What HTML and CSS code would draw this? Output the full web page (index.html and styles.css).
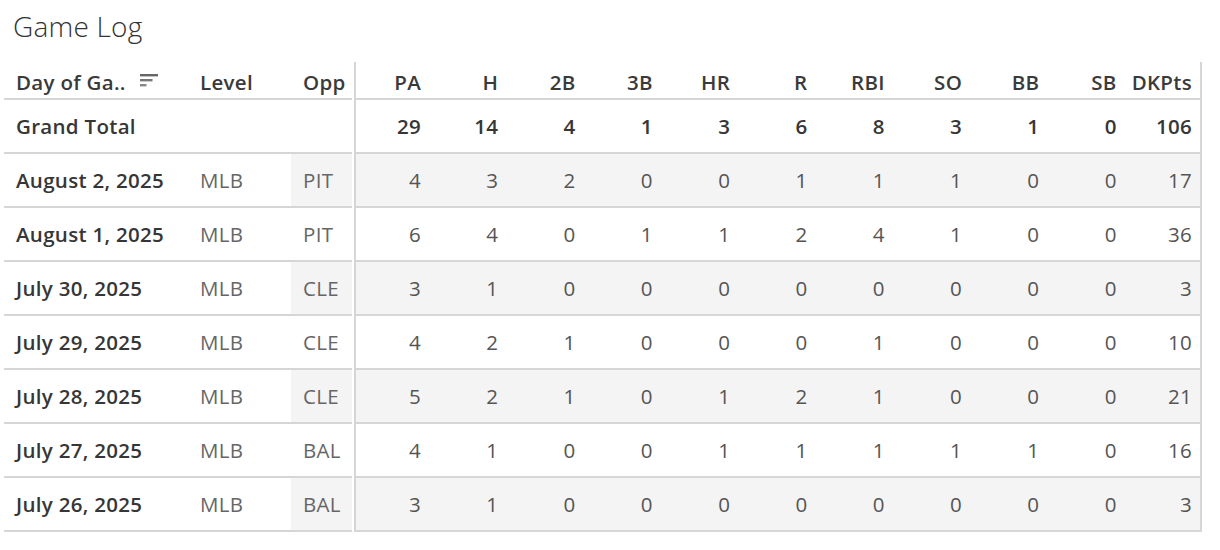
FILE: index.html
```html
<!DOCTYPE html>
<html lang="en">
<head>
<meta charset="utf-8">
<title>Game Log</title>
<link rel="stylesheet" href="styles.css">
</head>
<body>
<div class="page">
  <h1 class="title">Game Log</h1>
  <div class="log">
    <div class="row head">
      <div class="c date">Day of Ga.. <svg class="sort" width="19" height="13" viewBox="0 0 19 13"><rect x="0" y="0" width="18" height="2.4" fill="#666"/><rect x="0" y="5" width="12.5" height="2.4" fill="#777"/><rect x="0" y="10" width="6.5" height="2.4" fill="#888"/></svg></div>
      <div class="c lvl">Level</div>
      <div class="c opp">Opp</div>
      <div class="sep"></div>
      <div class="c n first">PA</div><div class="c n">H</div><div class="c n">2B</div><div class="c n">3B</div><div class="c n">HR</div><div class="c n">R</div><div class="c n">RBI</div><div class="c n">SO</div><div class="c n">BB</div><div class="c n">SB</div><div class="c n last">DKPts</div>
    </div>
    <div class="row total">
      <div class="c date">Grand Total</div>
      <div class="c lvl"></div>
      <div class="c opp"></div>
      <div class="sep"></div>
      <div class="c n first">29</div><div class="c n">14</div><div class="c n">4</div><div class="c n">1</div><div class="c n">3</div><div class="c n">6</div><div class="c n">8</div><div class="c n">3</div><div class="c n">1</div><div class="c n">0</div><div class="c n last">106</div>
    </div>
    <div class="row band">
      <div class="c date">August 2, 2025</div><div class="c lvl">MLB</div><div class="c opp">PIT</div><div class="sep"></div>
      <div class="c n first">4</div><div class="c n">3</div><div class="c n">2</div><div class="c n">0</div><div class="c n">0</div><div class="c n">1</div><div class="c n">1</div><div class="c n">1</div><div class="c n">0</div><div class="c n">0</div><div class="c n last">17</div>
    </div>
    <div class="row">
      <div class="c date">August 1, 2025</div><div class="c lvl">MLB</div><div class="c opp">PIT</div><div class="sep"></div>
      <div class="c n first">6</div><div class="c n">4</div><div class="c n">0</div><div class="c n">1</div><div class="c n">1</div><div class="c n">2</div><div class="c n">4</div><div class="c n">1</div><div class="c n">0</div><div class="c n">0</div><div class="c n last">36</div>
    </div>
    <div class="row band">
      <div class="c date">July 30, 2025</div><div class="c lvl">MLB</div><div class="c opp">CLE</div><div class="sep"></div>
      <div class="c n first">3</div><div class="c n">1</div><div class="c n">0</div><div class="c n">0</div><div class="c n">0</div><div class="c n">0</div><div class="c n">0</div><div class="c n">0</div><div class="c n">0</div><div class="c n">0</div><div class="c n last">3</div>
    </div>
    <div class="row">
      <div class="c date">July 29, 2025</div><div class="c lvl">MLB</div><div class="c opp">CLE</div><div class="sep"></div>
      <div class="c n first">4</div><div class="c n">2</div><div class="c n">1</div><div class="c n">0</div><div class="c n">0</div><div class="c n">0</div><div class="c n">1</div><div class="c n">0</div><div class="c n">0</div><div class="c n">0</div><div class="c n last">10</div>
    </div>
    <div class="row band">
      <div class="c date">July 28, 2025</div><div class="c lvl">MLB</div><div class="c opp">CLE</div><div class="sep"></div>
      <div class="c n first">5</div><div class="c n">2</div><div class="c n">1</div><div class="c n">0</div><div class="c n">1</div><div class="c n">2</div><div class="c n">1</div><div class="c n">0</div><div class="c n">0</div><div class="c n">0</div><div class="c n last">21</div>
    </div>
    <div class="row">
      <div class="c date">July 27, 2025</div><div class="c lvl">MLB</div><div class="c opp">BAL</div><div class="sep"></div>
      <div class="c n first">4</div><div class="c n">1</div><div class="c n">0</div><div class="c n">0</div><div class="c n">1</div><div class="c n">1</div><div class="c n">1</div><div class="c n">1</div><div class="c n">1</div><div class="c n">0</div><div class="c n last">16</div>
    </div>
    <div class="row band">
      <div class="c date">July 26, 2025</div><div class="c lvl">MLB</div><div class="c opp">BAL</div><div class="sep"></div>
      <div class="c n first">3</div><div class="c n">1</div><div class="c n">0</div><div class="c n">0</div><div class="c n">0</div><div class="c n">0</div><div class="c n">0</div><div class="c n">0</div><div class="c n">0</div><div class="c n">0</div><div class="c n last">3</div>
    </div>
  </div>
</div>
</body>
</html>
```
FILE: styles.css
```css
html, body {
  margin: 0;
  padding: 0;
  background: #fff;
}
body {
  font-family: "Open Sans", "Noto Sans", sans-serif;
  color: #333;
}
.page {
  padding: 10px 14px 0 4px;
}
.title {
  margin: 0 0 20px 9px;
  font-size: 28px;
  line-height: 32px;
  font-weight: 300;
  color: #333;
  letter-spacing: 0.2px;
}
.log {
  display: grid;
  grid-template-columns: 183px 104px 61px 2px 75px repeat(9, 77.3px) 77.3px;
  width: 1202px;
}
.row {
  display: contents;
}
.c {
  box-sizing: border-box;
  height: 54px;
  display: flex;
  align-items: center;
  border-bottom: 2px solid #d6d6d6;
  font-size: 20.5px;
  letter-spacing: 0.3px;
  white-space: nowrap;
}
.sep {
  height: 54px;
}
.head .c, .head .sep {
  height: 38px;
}
.head .c {
  align-items: flex-end;
  padding-bottom: 2px;
  font-weight: 600;
  color: #3a3a3a;
}
.date {
  padding-left: 12px;
  color: #363636;
  font-weight: 600;
}
.sort {
  margin-left: 14px;
  margin-bottom: 9px;
}
.lvl {
  padding-left: 13px;
  color: #666;
  font-weight: 400;
}
.opp {
  padding-left: 12px;
  color: #666;
  font-weight: 400;
}
.head .lvl, .head .opp {
  color: #3a3a3a;
}
.n {
  justify-content: flex-end;
  padding-right: 8px;
  color: #555;
  font-weight: 400;
}
.head .n {
  color: #3a3a3a;
}
.total .n {
  color: #363636;
  font-weight: 600;
}
.first {
  border-left: 2px solid #d6d6d6;
}
.last {
  border-right: 2px solid #d6d6d6;
}
.band .opp, .band .n {
  background: #f4f4f4;
}
```
